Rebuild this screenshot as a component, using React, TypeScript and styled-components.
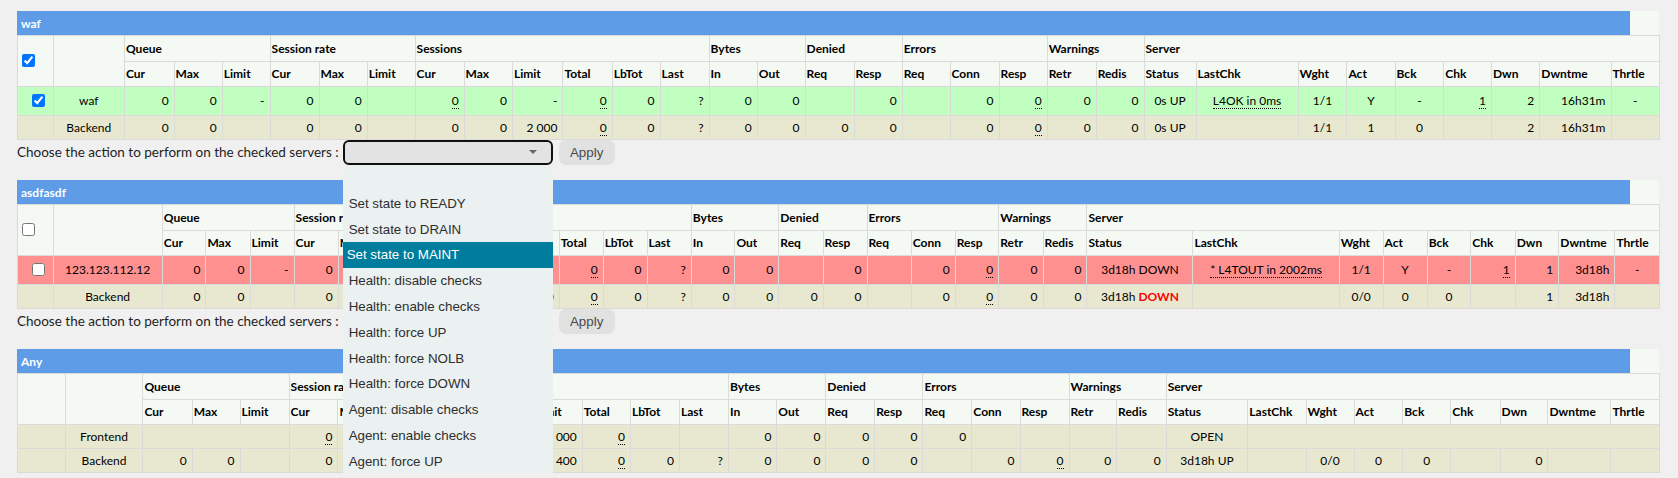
import React from 'react';
import styled, { createGlobalStyle } from 'styled-components';

type Align = 'l' | 'c' | 'r';
type Kind = 'up' | 'down' | 'backend' | 'frontend';
interface CellDef { v?: React.ReactNode; a: Align; span?: number; }
interface RowDef { kind: Kind; check: 'on' | 'off' | 'none'; cells: CellDef[]; }
interface TableDef { name: string; widths: number[]; headCheck: boolean; rows: RowDef[]; action: 'open' | 'closed' | 'none'; }

const Global = createGlobalStyle`
  html, body { margin: 0; padding: 0; overflow: hidden; background: #f0f0f0; }
  body { font-family: Lato, "Open Sans", sans-serif; color: #000; }
`;

const Page = styled.div`
  display: flex;
  flex-direction: column;
  gap: 15px;
  padding: 11px 19px 0 17px;
`;

const Section = styled.section`
  display: flex;
  flex-direction: column;
  width: 1642px;
`;

const TitleBar = styled.div`
  display: flex;
  height: 24px;
`;

const TitleName = styled.div`
  flex: 1;
  display: flex;
  align-items: center;
  padding-left: 4px;
  background: #5e9ce8;
  color: #fff;
  font-weight: 700;
  font-size: 12px;
`;

const TitleTail = styled.div`
  width: 29px;
  background: #f5f9f3;
`;

const Grid = styled.table`
  width: 1642px;
  table-layout: fixed;
  border-collapse: collapse;
  font-size: 12px;
`;

const HeadRow = styled.tr<{ $h: number }>`
  height: ${(p) => p.$h}px;
  background: #f5f9f3;
`;

const Th = styled.th<{ $pad?: boolean }>`
  border: 1px solid #dadada;
  font-weight: 700;
  text-align: left;
  vertical-align: middle;
  padding: ${(p) => (p.$pad ? '0' : '0 2px 0 1px')};
  white-space: nowrap;
  overflow: hidden;
`;

const rowBg: Record<Kind, string> = {
  up: '#c0ffc0',
  down: '#ff9090',
  backend: '#e8e8d0',
  frontend: '#e8e8d0',
};

const BodyRow = styled.tr<{ $kind: Kind; $h: number }>`
  height: ${(p) => p.$h}px;
  background: ${(p) => rowBg[p.$kind]};
`;

const Td = styled.td<{ $a: Align }>`
  border: 1px solid #dadada;
  padding: 0 5px;
  text-align: ${(p) => (p.$a === 'r' ? 'right' : p.$a === 'c' ? 'center' : 'left')};
  vertical-align: middle;
  white-space: nowrap;
  overflow: hidden;
`;

const CheckCell = styled.td`
  border: 1px solid #dadada;
  padding: 0 0 0 10px;
  text-align: left;
  vertical-align: middle;
`;

const CheckBox = styled.input`
  width: 13px;
  height: 13px;
  margin: 3px 3px 3px 4px;
  vertical-align: middle;
  accent-color: #0075ff;
`;

const Dotted = styled.span`
  border-bottom: 1px dotted #000;
`;

const DownText = styled.b`
  color: #ff0000;
`;

const ActionRow = styled.div`
  display: flex;
  align-items: center;
  height: 25.5px;
  font-size: 13.5px;
  color: #1e1e1e;
`;

const SelectHolder = styled.div`
  position: relative;
  margin-left: 4px;
  width: 210px;
  height: 25.5px;
`;

const SelectBox = styled.div<{ $focused: boolean }>`
  box-sizing: border-box;
  height: 100%;
  display: flex;
  align-items: center;
  justify-content: flex-end;
  padding-right: 14px;
  border: ${(p) => (p.$focused ? '2px solid #101010' : '1px solid #8f8f8f')};
  border-radius: 6px;
  background: #e3e3e3;
`;

const OptionList = styled.ul`
  position: absolute;
  top: 100%;
  left: 0;
  width: 210px;
  margin: 0;
  padding: 0;
  list-style: none;
  background: #ebf0f0;
  z-index: 10;
  font-family: "Liberation Sans", Arial, sans-serif;
  font-size: 13.33px;
`;

const OptionItem = styled.li<{ $active?: boolean }>`
  height: 25.8px;
  line-height: 25.8px;
  padding-left: ${(p) => (p.$active ? '4px' : '6px')};
  white-space: nowrap;
  color: ${(p) => (p.$active ? '#ffffff' : '#2e2e2e')};
  background: ${(p) => (p.$active ? '#007d9c' : 'transparent')};
`;

const ApplyButton = styled.button`
  margin-left: 6px;
  width: 56px;
  height: 25px;
  border: none;
  border-radius: 7px;
  background: #e1e1e1;
  color: #4a4a4a;
  font-family: "Liberation Sans", Arial, sans-serif;
  font-size: 13.33px;
  padding: 0;
`;

const R = (v?: React.ReactNode): CellDef => ({ v, a: 'r' });
const C = (v?: React.ReactNode): CellDef => ({ v, a: 'c' });
const E: CellDef = { a: 'r' };
const u = (v: string) => <Dotted>{v}</Dotted>;

const groups: [string, number][] = [
  ['Queue', 3], ['Session rate', 3], ['Sessions', 6], ['Bytes', 2],
  ['Denied', 2], ['Errors', 3], ['Warnings', 2], ['Server', 9],
];
const subs = [
  'Cur', 'Max', 'Limit', 'Cur', 'Max', 'Limit', 'Cur', 'Max', 'Limit', 'Total', 'LbTot', 'Last',
  'In', 'Out', 'Req', 'Resp', 'Req', 'Conn', 'Resp', 'Retr', 'Redis',
  'Status', 'LastChk', 'Wght', 'Act', 'Bck', 'Chk', 'Dwn', 'Dwntme', 'Thrtle',
];

const options = [
  '', 'Set state to READY', 'Set state to DRAIN', 'Set state to MAINT',
  'Health: disable checks', 'Health: enable checks', 'Health: force UP', 'Health: force NOLB',
  'Health: force DOWN', 'Agent: disable checks', 'Agent: enable checks', 'Agent: force UP',
  'Agent: force DOWN', 'Kill Sessions',
];

const tables: TableDef[] = [
  {
    name: 'waf',
    headCheck: true,
    action: 'open',
    widths: [35.5, 71.5, 49.6, 48.2, 47.8, 49, 48.2, 47.8, 49, 48.4, 50.5, 49.3, 47.8, 49, 48.2, 47.8,
      49, 48.2, 47.8, 49, 48.2, 48.9, 47.9, 52, 102, 48.9, 48.1, 48.8, 47.6, 48.4, 71.2, 48.4],
    rows: [
      {
        kind: 'up', check: 'on',
        cells: [C('waf'), R('0'), R('0'), R('-'), R('0'), R('0'), E, R(u('0')), R('0'), R('-'), R(u('0')),
          R('0'), R('?'), R('0'), R('0'), E, R('0'), E, R('0'), R(u('0')), R('0'), R('0'),
          C('0s UP'), C(u('L4OK in 0ms')), C('1/1'), C('Y'), C('-'), R(u('1')), R('2'), R('16h31m'), C('-')],
      },
      {
        kind: 'backend', check: 'none',
        cells: [C('Backend'), R('0'), R('0'), E, R('0'), R('0'), E, R('0'), R('0'), R('2 000'), R(u('0')),
          R('0'), R('?'), R('0'), R('0'), R('0'), R('0'), E, R('0'), R(u('0')), R('0'), R('0'),
          C('0s UP'), E, C('1/1'), C('1'), C('0'), E, R('2'), R('16h31m'), E],
      },
    ],
  },
  {
    name: 'asdfasdf',
    headCheck: true,
    action: 'closed',
    widths: [35.5, 109.3, 43.6, 44.2, 44, 44.2, 44.2, 44.2, 44.2, 44.2, 44.2, 43.9, 43.9, 44.3, 43.6, 43.9,
      44.3, 43.9, 44.3, 43.9, 43.6, 44.3, 43.9, 106, 146.2, 43.9, 44.1, 43.7, 44.3, 43.7, 56.1, 44.6],
    rows: [
      {
        kind: 'down', check: 'off',
        cells: [C('123.123.112.12'), R('0'), R('0'), R('-'), R('0'), R('0'), E, R(u('0')), R('0'), R('-'), R(u('0')),
          R('0'), R('?'), R('0'), R('0'), E, R('0'), E, R('0'), R(u('0')), R('0'), R('0'),
          C('3d18h DOWN'), C(u('* L4TOUT in 2002ms')), C('1/1'), C('Y'), C('-'), R(u('1')), R('1'), R('3d18h'), C('-')],
      },
      {
        kind: 'backend', check: 'none',
        cells: [C('Backend'), R('0'), R('0'), E, R('0'), R('0'), E, R('0'), R('0'), R('2 000'), R(u('0')),
          R('0'), R('?'), R('0'), R('0'), R('0'), R('0'), E, R('0'), R(u('0')), R('0'), R('0'),
          C(<>3d18h <DownText>DOWN</DownText></>), E, C('0/0'), C('0'), C('0'), E, R('1'), R('3d18h'), E],
      },
    ],
  },
  {
    name: 'Any',
    headCheck: false,
    action: 'none',
    widths: [47.6, 77.9, 49.3, 47.8, 49, 48.87, 48.87, 48.87, 48.87, 48.86, 48.86, 48.2, 49, 49, 48.4, 49,
      48.9, 48.2, 48.9, 48.2, 49, 47.6, 49.5, 81.7, 58.2, 48, 48.8, 47.9, 49.4, 47.9, 63, 48.4],
    rows: [
      {
        kind: 'frontend', check: 'none',
        cells: [C('Frontend'), { a: 'r', span: 3 }, R(u('0')), R('0'), E, R('0'), R('0'), R('2 000'), R(u('0')),
          E, E, R('0'), R('0'), R('0'), R('0'), R('0'), E, E, E, E,
          C('OPEN'), { a: 'r', span: 8 }],
      },
      {
        kind: 'backend', check: 'none',
        cells: [C('Backend'), R('0'), R('0'), E, R('0'), R('0'), E, R('0'), R('0'), R('400'), R(u('0')),
          R('0'), R('?'), R('0'), R('0'), R('0'), R('0'), E, R('0'), R(u('0')), R('0'), R('0'),
          C('3d18h UP'), E, C('0/0'), C('0'), C('0'), E, R('0'), E, E],
      },
    ],
  },
];

function ActionBar({ open }: { open: boolean }) {
  return (
    <ActionRow>
      <span>Choose the action to perform on the checked servers :</span>
      <SelectHolder>
        <SelectBox $focused={open}>
          <svg width="8" height="4" viewBox="0 0 8 4">
            <path d="M0 0h8L4 4z" fill="#666" />
          </svg>
        </SelectBox>
        {open && (
          <OptionList>
            {options.map((o, i) => (
              <OptionItem key={i} $active={o === 'Set state to MAINT'}>
                {o || '\u00a0'}
              </OptionItem>
            ))}
          </OptionList>
        )}
      </SelectHolder>
      <ApplyButton type="button">Apply</ApplyButton>
    </ActionRow>
  );
}

function StatsTable({ t }: { t: TableDef }) {
  return (
    <Section>
      <TitleBar>
        <TitleName>{t.name}</TitleName>
        <TitleTail />
      </TitleBar>
      <Grid>
        <colgroup>
          {t.widths.map((w, i) => (
            <col key={i} style={{ width: `${w}px` }} />
          ))}
        </colgroup>
        <thead>
          <HeadRow $h={25.5}>
            <Th rowSpan={2} $pad>
              {t.headCheck && <CheckBox type="checkbox" defaultChecked={t.name === 'waf'} />}
            </Th>
            <Th rowSpan={2} />
            {groups.map(([g, n]) => (
              <Th key={g} colSpan={n}>{g}</Th>
            ))}
          </HeadRow>
          <HeadRow $h={25}>
            {subs.map((s, i) => (
              <Th key={i}>{s}</Th>
            ))}
          </HeadRow>
        </thead>
        <tbody>
          {t.rows.map((r, ri) => (
            <BodyRow key={ri} $kind={r.kind} $h={r.check === 'none' ? 24 : 29}>
              {r.check === 'none' ? (
                <Td $a="c" />
              ) : (
                <CheckCell>
                  <CheckBox type="checkbox" defaultChecked={r.check === 'on'} />
                </CheckCell>
              )}
              {r.cells.map((c, ci) => (
                <Td key={ci} $a={c.a} colSpan={c.span}>{c.v}</Td>
              ))}
            </BodyRow>
          ))}
        </tbody>
      </Grid>
      {t.action !== 'none' && <ActionBar open={t.action === 'open'} />}
    </Section>
  );
}

export default function App() {
  return (
    <>
      <Global />
      <Page>
        {tables.map((t) => (
          <StatsTable key={t.name} t={t} />
        ))}
      </Page>
    </>
  );
}
